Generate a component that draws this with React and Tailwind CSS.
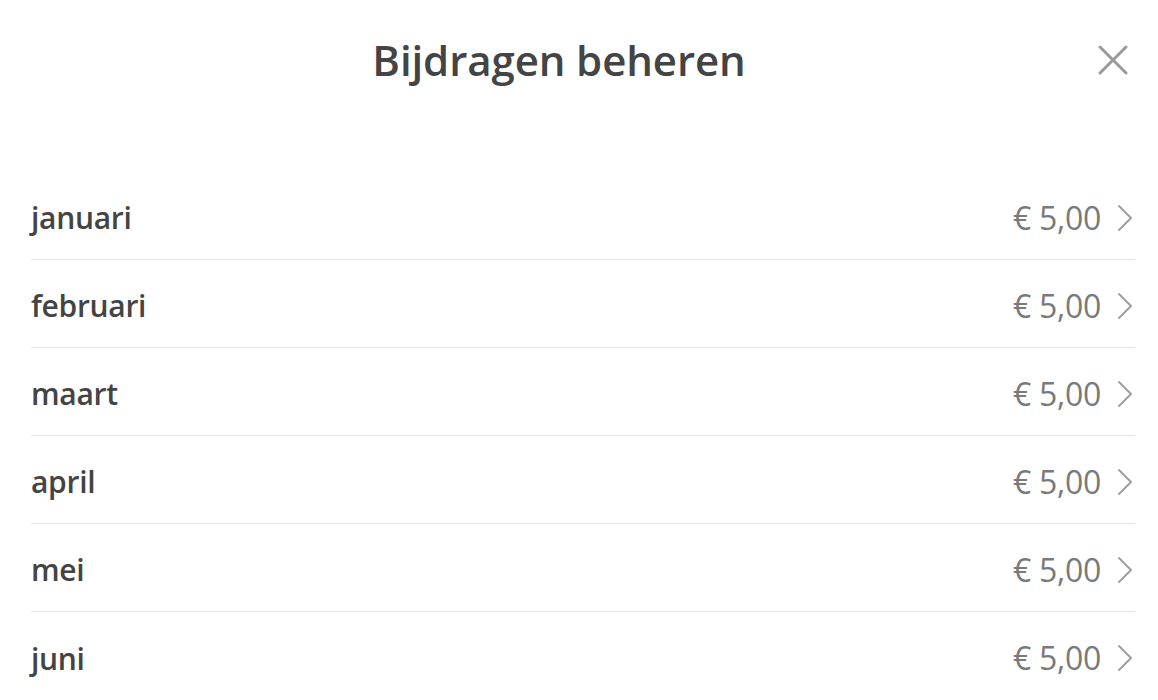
import React from "react";

const months = ["januari", "februari", "maart", "april", "mei", "juni"];

function Chevron() {
  return (
    <svg width="16" height="28" viewBox="0 0 16 28" fill="none" className="shrink-0 mr-[2px]">
      <path d="M2 2 L14 14 L2 26" stroke="#a0a0a0" strokeWidth="2" strokeLinecap="round" strokeLinejoin="round" />
    </svg>
  );
}

export default function App() {
  return (
    <div className="w-[1158px] h-[700px] bg-white overflow-hidden" style={{ fontFamily: '"Open Sans", sans-serif' }}>
      <div className="relative h-[120px] flex items-center justify-center pr-[40px] pb-[1px]">
        <h1 className="text-[42px] font-semibold text-[#444444] tracking-[-0.1px]">Bijdragen beheren</h1>
        <button className="absolute right-[30px] top-[45px] w-[30px] h-[30px] flex items-center justify-center">
          <svg width="30" height="30" viewBox="0 0 30 30">
            <path d="M2 2 L28 28 M28 2 L2 28" stroke="#9a9a9a" strokeWidth="3" strokeLinecap="round" />
          </svg>
        </button>
      </div>
      <div className="mt-[52px] ml-[31px] mr-[23px]">
        {months.map((m) => (
          <div key={m} className="h-[88px] pt-[4px] flex items-center justify-between border-b border-[#e3e3e3] last:border-b-0">
            <span className="text-[30px] font-semibold text-[#444444] tracking-[-0.3px]">{m}</span>
            <div className="flex items-center gap-[16px]">
              <span className="text-[32px] text-[#7a7a7a] tracking-[-0.3px]">€ 5,00</span>
              <Chevron />
            </div>
          </div>
        ))}
      </div>
    </div>
  );
}
